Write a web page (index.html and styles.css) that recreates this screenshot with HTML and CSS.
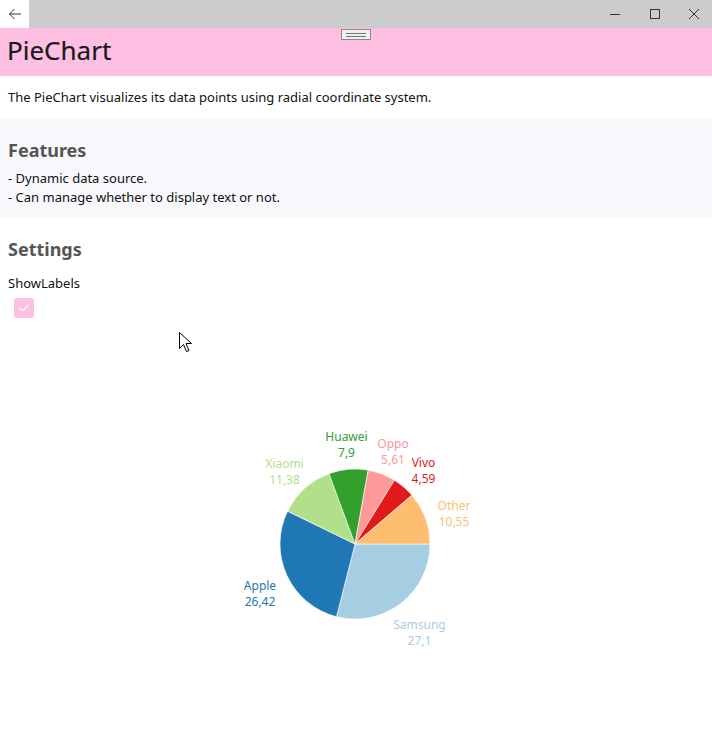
FILE: index.html
```html
<!DOCTYPE html>
<html lang="en">
<head>
<meta charset="utf-8">
<title>PieChart</title>
<link rel="stylesheet" href="styles.css">
</head>
<body>
<div class="titlebar">
  <div class="back">
    <svg width="14" height="12" viewBox="0 0 14 12"><path d="M13 6H1.5M6.5 1L1.5 6l5 5" fill="none" stroke="#333" stroke-width="1"/></svg>
  </div>
  <div class="spacer"></div>
  <div class="caps">
    <div class="cap"><svg width="12" height="12" viewBox="0 0 12 12"><path d="M1 6.5h10" stroke="#333" stroke-width="1"/></svg></div>
    <div class="cap"><svg width="12" height="12" viewBox="0 0 12 12"><rect x="1.5" y="1.5" width="9" height="9" fill="none" stroke="#333" stroke-width="1"/></svg></div>
    <div class="cap"><svg width="12" height="12" viewBox="0 0 12 12"><path d="M1 1l10 10M11 1L1 11" stroke="#333" stroke-width="1"/></svg></div>
  </div>
</div>
<header class="hero"><h1>PieChart</h1></header>
<div class="grip"><span></span><span></span></div>
<p class="desc">The PieChart visualizes its data points using radial coordinate system.</p>
<section class="features">
  <h2>Features</h2>
  <p>- Dynamic data source.</p>
  <p>- Can manage whether to display text or not.</p>
</section>
<section class="settings">
  <h2>Settings</h2>
  <div class="opt">ShowLabels</div>
  <div class="checkbox">
    <svg width="12" height="10" viewBox="0 0 12 10"><path d="M1.5 5l3 3 6-6.5" fill="none" stroke="#fff" stroke-width="1.2"/></svg>
  </div>
</section>
<div class="chart">
  <svg width="712" height="422" viewBox="0 0 712 422">
    <g transform="translate(355 226)" stroke="#fff" stroke-width="0.6">
      <path fill="#a6cee3" d="M0 0L75 0A75 75 0 0 1 -18.51 72.68Z"/>
      <path fill="#1f78b4" d="M0 0L-18.51 72.68A75 75 0 0 1 -67.43 -32.84Z"/>
      <path fill="#b2df8a" d="M0 0L-67.43 -32.84A75 75 0 0 1 -25.96 -70.37Z"/>
      <path fill="#33a02c" d="M0 0L-25.96 -70.37A75 75 0 0 1 13.22 -73.83Z"/>
      <path fill="#fb9a99" d="M0 0L13.22 -73.83A75 75 0 0 1 39.45 -63.79Z"/>
      <path fill="#e31a1c" d="M0 0L39.45 -63.79A75 75 0 0 1 56.95 -48.81Z"/>
      <path fill="#fdbf6f" d="M0 0L56.95 -48.81A75 75 0 0 1 75 0Z"/>
    </g>
    <g class="lbl" transform="translate(0 -317)">
      <text fill="#33a02c" x="346.5" y="440">Huawei</text><text fill="#33a02c" x="346.5" y="456">7,9</text>
      <text fill="#fb9a99" x="393" y="447">Oppo</text><text fill="#fb9a99" x="393" y="463">5,61</text>
      <text fill="#e31a1c" x="423.5" y="466">Vivo</text><text fill="#e31a1c" x="423.5" y="482">4,59</text>
      <text fill="#fdbf6f" x="454" y="509">Other</text><text fill="#fdbf6f" x="454" y="525">10,55</text>
      <text fill="#a6cee3" x="419.5" y="628">Samsung</text><text fill="#a6cee3" x="419.5" y="644">27,1</text>
      <text fill="#1f78b4" x="260" y="589">Apple</text><text fill="#1f78b4" x="260" y="605">26,42</text>
      <text fill="#b2df8a" x="284.5" y="467">Xiaomi</text><text fill="#b2df8a" x="284.5" y="483">11,38</text>
    </g>
  </svg>
</div>
<svg class="cursor" width="14" height="22" viewBox="0 0 14 22"><path d="M0.5 0.5v16l4-4 3 7 2.5-1-3-7h5.5z" fill="#fff" stroke="#000" stroke-width="1"/></svg>
</body>
</html>
```
FILE: styles.css
```css
* { box-sizing: border-box; }
html, body { margin: 0; padding: 0; }
body {
  width: 712px;
  height: 740px;
  overflow: hidden;
  background: #fff;
  font-family: "Noto Sans", "Open Sans", sans-serif;
  color: #111;
  position: relative;
}
.titlebar {
  display: flex;
  height: 28px;
  background: #cccccc;
}
.back {
  width: 29px;
  height: 28px;
  background: #fff;
  display: flex;
  align-items: center;
  justify-content: center;
}
.spacer { flex: 1; }
.caps { display: flex; }
.cap {
  width: 40px;
  height: 28px;
  display: flex;
  align-items: center;
  justify-content: center;
}
.cap:last-child { width: 37px; }
.hero {
  background: #ffbfe3;
  height: 48px;
  padding: 0 7px;
}
.hero h1 {
  margin: 0;
  font-weight: 400;
  font-size: 26px;
  line-height: 44px;
  color: #1a1a1a;
  -webkit-text-stroke: 0.2px #1a1a1a;
}
.grip {
  position: absolute;
  left: 341px;
  top: 29px;
  width: 30px;
  height: 11px;
  background: #eef0f0;
  border: 1px solid #8a8a8a;
  display: flex;
  flex-direction: column;
  justify-content: center;
  align-items: center;
  gap: 2px;
}
.grip span {
  display: block;
  width: 20px;
  height: 1px;
  background: #777;
}
.desc {
  margin: 0;
  padding: 12px 8px;
  font-size: 13px;
  line-height: 19px;
}
.features {
  background: #f8f8fc;
  padding: 19px 8px 11px;
  height: 98px;
}
h2 {
  margin: 0 0 7px;
  font-size: 18px;
  line-height: 24px;
  font-weight: 700;
  color: #555;
}
.features p {
  margin: 0;
  font-size: 13px;
  line-height: 19px;
}
.settings {
  padding: 20px 8px 0;
}
.settings h2 { margin-bottom: 6px; }
.opt {
  font-size: 13px;
  line-height: 19px;
  margin-top: 13px;
}
.checkbox {
  width: 20px;
  height: 20px;
  margin: 5px 0 0 6px;
  background: #ffbfe3;
  border-radius: 3px;
  display: flex;
  align-items: center;
  justify-content: center;
}
.chart svg { display: block; }
.lbl text {
  font-size: 12px;
  text-anchor: middle;
}
.cursor {
  position: absolute;
  left: 179px;
  top: 332px;
}
```
